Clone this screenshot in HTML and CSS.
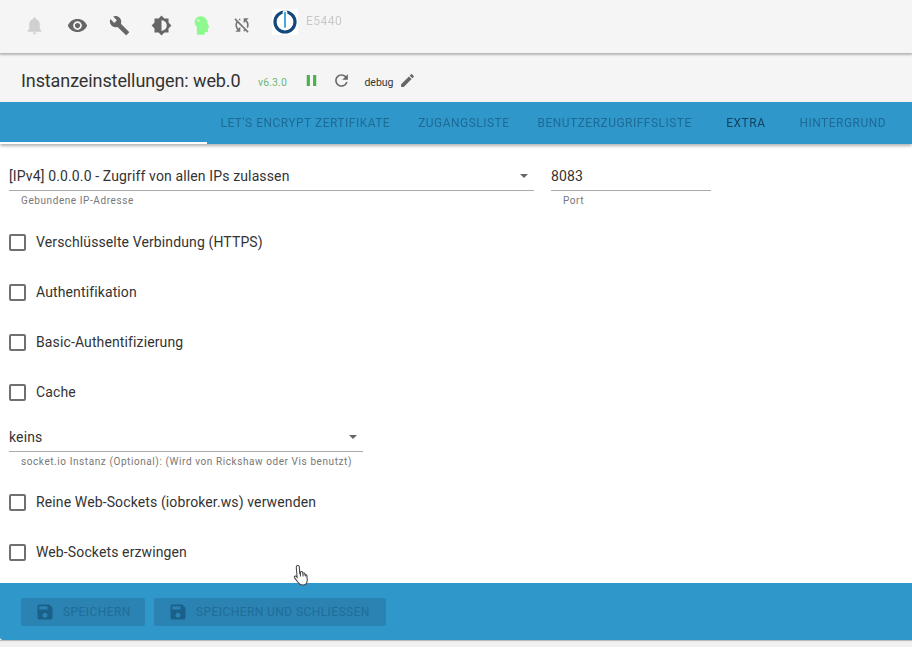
FILE: index.html
```html
<!DOCTYPE html>
<html lang="de">
<head>
<meta charset="utf-8">
<title>Instanzeinstellungen: web.0</title>
<link rel="stylesheet" href="styles.css">
</head>
<body>
<div class="page">
  <header class="topbar">
    <svg class="ico bell" viewBox="0 0 24 24"><path d="M12 22c1.100 0 2-.9 2-2h-4c0 1.100.9 2 2 2zm6-6v-5c0-3.100-1.600-5.600-4.500-6.300V4c0-.8-.7-1.500-1.500-1.500s-1.500.7-1.500 1.500v.7C7.600 5.400 6 7.900 6 11v5l-2 2v1h16v-1l-2-2z"/></svg>
    <svg class="ico eye" viewBox="0 0 24 24"><path d="M12 4.500C7 4.500 2.700 7.600 1 12c1.700 4.400 6 7.500 11 7.500s9.300-3.100 11-7.500c-1.700-4.400-6-7.500-11-7.500zM12 17c-2.800 0-5-2.200-5-5s2.200-5 5-5 5 2.200 5 5-2.200 5-5 5zm0-8c-1.700 0-3 1.300-3 3s1.300 3 3 3 3-1.300 3-3-1.300-3-3-3z"/></svg>
    <svg class="ico wrench" viewBox="0 0 24 24"><path d="M22.700 19l-9.100-9.100c.9-2.300.4-5-1.500-6.900-2-2-5-2.400-7.400-1.300L9 6 6 9 1.600 4.700C.4 7.100.9 10.100 2.900 12.100c1.900 1.900 4.600 2.400 6.900 1.500l9.100 9.100c.4.400 1 .4 1.400 0l2.300-2.300c.5-.4.5-1.100.1-1.400z"/></svg>
    <svg class="ico bright" viewBox="0 0 24 24"><path d="M20 8.690V4h-4.690L12 .69 8.690 4H4v4.690L.69 12 4 15.310V20h4.690L12 23.310 15.310 20H20v-4.690L23.310 12 20 8.690zM12 18V6c3.310 0 6 2.690 6 6s-2.690 6-6 6z"/></svg>
    <svg class="ico head" viewBox="0 0 24 24"><path d="M11.500 1.500c-4.200 0-7.300 2.800-7.300 6.500 0 2.500 1.200 4.200 2.500 5.500v9h8.800v-2.800h2.200c1 0 1.700-.7 1.700-1.700v-3.200l1.500-.5-1.800-4.600C18.500 5 15.800 1.500 11.500 1.500z"/><circle class="head-eye" cx="8.500" cy="6.500" r="1.300"/></svg>
    <svg class="ico sync" viewBox="0 0 24 24"><path d="M10 6.350V4.260c-.8.210-1.500.54-2.190.96l1.470 1.470c.25-.12.470-.24.720-.34zM20 12c0-2.210-.91-4.200-2.360-5.640L20 4h-6v6l2.240-2.240C17.320 8.850 18 10.340 18 12c0 .85-.18 1.660-.5 2.390l1.500 1.500A7.940 7.940 0 0 0 20 12zM4.270 4L2.860 5.410l2.360 2.360C4.450 9 4 10.450 4 12c0 2.210.91 4.200 2.360 5.640L4 20h6v-6l-2.240 2.240C6.680 15.150 6 13.660 6 12c0-1 .25-1.940.68-2.770l8.080 8.080c-.25.130-.5.240-.76.350v2.090c.8-.21 1.550-.54 2.230-.96l2.360 2.360 1.410-1.410L4.270 4z"/></svg>
    <div class="logo">
      <svg viewBox="0 0 26 26"><circle class="logo-ring" cx="13" cy="13" r="10"/><rect class="logo-bar" x="11.300" y="2" width="3.400" height="17.500" rx="1.600"/></svg>
    </div>
    <span class="host">E5440</span>
  </header>

  <div class="titlerow">
    <h1 class="title">Instanzeinstellungen: web.0</h1>
    <span class="version">v6.3.0</span>
    <svg class="tool pause" viewBox="0 0 24 24"><path d="M6 19h4V5H6v14zm8-14v14h4V5h-4z"/></svg>
    <svg class="tool reload" viewBox="0 0 24 24"><path d="M17.650 6.350A7.960 7.960 0 0 0 12 4c-4.420 0-7.990 3.580-7.990 8s3.570 8 7.990 8c3.730 0 6.840-2.550 7.730-6h-2.080A5.990 5.990 0 0 1 12 18c-3.310 0-6-2.690-6-6s2.690-6 6-6c1.660 0 3.140.69 4.220 1.780L13 11h7V4l-2.350 2.350z"/></svg>
    <span class="loglevel">debug</span>
    <svg class="tool pencil" viewBox="0 0 24 24"><path d="M3 17.250V21h3.750L17.810 9.940l-3.750-3.750L3 17.250zM20.710 7.040a1 1 0 0 0 0-1.410l-2.340-2.340a1 1 0 0 0-1.410 0l-1.830 1.830 3.750 3.750 1.830-1.830z"/></svg>
  </div>

  <nav class="tabs">
    <div class="tab-first"></div>
    <span class="tab">Let's Encrypt Zertifikate</span>
    <span class="tab">Zugangsliste</span>
    <span class="tab">Benutzerzugriffsliste</span>
    <span class="tab active">Extra</span>
    <span class="tab wide">Hintergrund</span>
  </nav>

  <main class="content">
    <div class="fieldrow">
      <div class="field field-ip">
        <div class="value">[IPv4] 0.0.0.0 - Zugriff von allen IPs zulassen<i class="caret"></i></div>
        <div class="hint">Gebundene IP-Adresse</div>
      </div>
      <div class="field field-port">
        <div class="value">8083</div>
        <div class="hint">Port</div>
      </div>
    </div>
    <label class="check first"><i class="box"></i>Verschlüsselte Verbindung (HTTPS)</label>
    <label class="check"><i class="box"></i>Authentifikation</label>
    <label class="check"><i class="box"></i>Basic-Authentifizierung</label>
    <label class="check"><i class="box"></i>Cache</label>
    <div class="field field-socket">
      <div class="value">keins<i class="caret"></i></div>
      <div class="hint">socket.io Instanz (Optional): (Wird von Rickshaw oder Vis benutzt)</div>
    </div>
    <label class="check after-socket"><i class="box"></i>Reine Web-Sockets (iobroker.ws) verwenden</label>
    <label class="check"><i class="box"></i>Web-Sockets erzwingen</label>
    <svg class="cursor" viewBox="0 0 16 22"><path d="M4.500 1.500c1 0 1.500.7 1.500 1.600l.3 6 .7-.2.100-1.400c.9-.6 1.700-.3 2 .5l.1 1c.8-.6 1.700-.4 2 .4l.1 1c.8-.4 1.700-.2 1.900.8l.3 4c0 2.500-1.500 4.800-4.300 4.900-2.300.1-3.600-1-4.600-2.600L1.300 13c-.6-1 .5-2 1.500-1.300l1 1L3 3.200c0-1 .6-1.700 1.500-1.700z"/><path class="cursor-line" d="M7 9v3M9.500 9.500V12M12 10.500V12"/></svg>
  </main>

  <footer class="actions">
    <button class="btn btn-save"><svg viewBox="0 0 24 24"><path d="M17 3H5a2 2 0 0 0-2 2v14a2 2 0 0 0 2 2h14c1.100 0 2-.9 2-2V7l-4-4zm-5 16c-1.660 0-3-1.340-3-3s1.340-3 3-3 3 1.340 3 3-1.340 3-3 3zm3-10H5V5h10v4z"/></svg>Speichern</button>
    <button class="btn btn-close"><svg viewBox="0 0 24 24"><path d="M17 3H5a2 2 0 0 0-2 2v14a2 2 0 0 0 2 2h14c1.100 0 2-.9 2-2V7l-4-4zm-5 16c-1.660 0-3-1.340-3-3s1.340-3 3-3 3 1.340 3 3-1.340 3-3 3zm3-10H5V5h10v4z"/></svg>Speichern und schließen</button>
  </footer>
</div>
</body>
</html>
```
FILE: styles.css
```css
html, body { margin: 0; padding: 0; background: #f1f1f1; }
body { width: 912px; height: 647px; overflow: hidden; font-family: Roboto, "Liberation Sans", sans-serif; color: #333; }
.page { display: flex; flex-direction: column; height: 640px; filter: blur(0.6px); background: #f4f4f4; position: relative; box-shadow: 0 1px 1px #bbb; }

.topbar { height: 54px; box-sizing: border-box; flex: none; display: flex; align-items: flex-start; padding: 0 0 0 24px; background: #f5f5f5; border-bottom: 1px solid #b9b9b9; box-shadow: 0 1px 2px rgba(0,0,0,.25); position: relative; z-index: 2; }
.ico { width: 21px; height: 21px; fill: #666; flex: none; margin-top: 14.500px; margin-right: 21px; }
.bell { fill: #d0d0d0; margin-right: 22px; }
.bright { margin-right: 19px; }
.head { fill: #8ef98e; margin-right: 20px; }
.head-eye { fill: #e3fbe3; }
.sync { width: 20px; height: 20px; margin-top: 15px; margin-right: 20px; fill: #777; }
.logo { width: 26px; height: 26px; background: #fff; margin-top: 9px; flex: none; }
.logo svg { display: block; width: 26px; height: 26px; }
.logo-ring { fill: none; stroke: #14477c; stroke-width: 3.200; }
.logo-bar { fill: #4aa6dc; stroke: #fff; stroke-width: 1.400; }
.host { font-size: 12px; color: #c8c8c8; margin-left: 8px; margin-top: 14px; letter-spacing: .5px; }

.titlerow { height: 48px; flex: none; display: flex; align-items: center; padding-left: 21px; padding-top: 4px; box-sizing: border-box; background: #f5f5f5; }
.title { font-size: 18px; font-weight: 400; margin: 0; color: #333; letter-spacing: -.1px; }
.version { font-size: 10.500px; color: #6fb877; margin-left: 17.500px; margin-top: 4px; letter-spacing: .1px; }
.tool { flex: none; width: 19px; height: 19px; }
.pause { fill: #4caf50; margin-left: 15px; }
.reload { fill: #666; margin-left: 11px; }
.loglevel { font-size: 10.500px; color: #333; margin-left: 13.500px; margin-top: 5px; }
.pencil { fill: #666; margin-left: 5px; width: 17px; height: 17px; }

.tabs { height: 42px; flex: none; display: flex; align-items: center; background: #3097cb; box-shadow: 0 2px 3px rgba(0,0,0,.3); position: relative; z-index: 1; }
.tab-first { width: 207px; height: 42px; box-sizing: border-box; border-bottom: 2px solid #fff; flex: none; }
.tab { text-transform: uppercase; font-size: 11.900px; color: #1d6a94; margin-left: 13.500px; margin-right: 14.500px; white-space: nowrap; letter-spacing: .54px; }
.tab.active { color: #123f5c; letter-spacing: .55px; margin-left: 20px; margin-right: 20px; }
.tab.wide { margin-left: 14px; }

.content { flex: 1; background: #fff; position: relative; padding: 0 0 0 9px; }
.fieldrow { display: flex; padding-top: 20px; gap: 17px; }
.field { flex: none; }
.field-ip { width: 525px; }
.field-port { width: 160px; }
.field-socket { width: 354px; margin-top: 8px; }
.value { position: relative; height: 27px; line-height: 24px; box-sizing: border-box; font-size: 14px; letter-spacing: .13px; border-bottom: 1px solid #aaa; color: #333; }
.caret { position: absolute; right: 6px; top: 10px; width: 0; height: 0; border: 4px solid transparent; border-top: 4px solid #666; border-bottom: 0; }
.hint { font-size: 10px; color: #777; margin: 4px 0 0 12px; line-height: 12px; letter-spacing: .58px; white-space: nowrap; }
.check { display: flex; align-items: center; height: 50px; font-size: 14px; letter-spacing: .12px; color: #333; }
.check.first { margin-top: 10px; }
.check.after-socket { margin-top: 9px; }
.box { width: 13px; height: 13px; border: 2px solid #707070; border-radius: 2px; margin-right: 10px; flex: none; }

.cursor { position: absolute; left: 293px; top: 420px; width: 17px; height: 23px; z-index: 5; }
.cursor path { fill: #fff; stroke: #444; stroke-width: 1; }
.cursor .cursor-line { fill: none; }

.actions { height: 57px; flex: none; box-sizing: border-box; display: flex; align-items: center; gap: 9px; padding: 0 0 0 21px; background: #3097cb; border-radius: 0 0 0 3px; }
.btn { display: flex; align-items: center; height: 28px; border: 0; border-radius: 2px; background: #2a83b2; color: #1f6d98; font-family: inherit; font-size: 12px; text-transform: uppercase; letter-spacing: .42px; padding: 0; }
.btn svg { width: 20px; height: 20px; fill: #1a618a; margin-right: 8px; }
.btn-save { width: 124px; padding-left: 14px; box-sizing: border-box; }
.btn-close { width: 232px; padding-left: 14px; box-sizing: border-box; }
```
